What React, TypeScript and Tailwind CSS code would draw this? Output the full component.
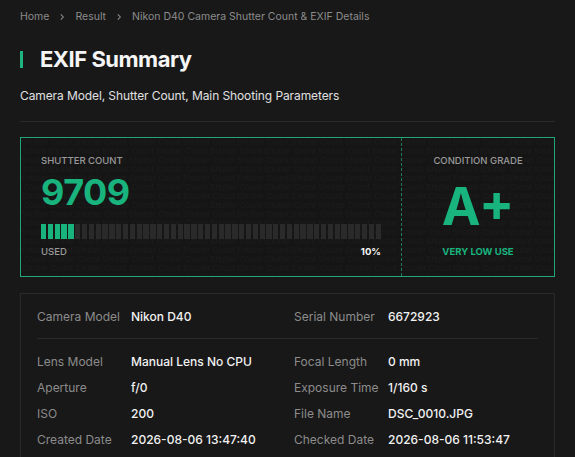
const rows = [
  [
    { label: "Lens Model", value: "Manual Lens No CPU" },
    { label: "Focal Length", value: "0 mm" },
  ],
  [
    { label: "Aperture", value: "f/0" },
    { label: "Exposure Time", value: "1/160 s" },
  ],
  [
    { label: "ISO", value: "200" },
    { label: "File Name", value: "DSC_0010.JPG" },
  ],
  [
    { label: "Created Date", value: "2026-08-06 13:47:40" },
    { label: "Checked Date", value: "2026-08-06 11:53:47" },
  ],
];

const SEGMENTS = 50;
const USED = 5;

function Chevron() {
  return (
    <svg width="8" height="8" viewBox="0 0 8 8" className="mx-[9px]" fill="none">
      <path d="M2.8 1.3 5.3 4 2.8 6.7" stroke="#8a8a8a" strokeWidth="1.1" />
    </svg>
  );
}

// faint repeated "Shutter Count" texture behind the shutter card
function Watermark() {
  return (
    <svg className="pointer-events-none absolute inset-0 h-full w-full" aria-hidden>
      <defs>
        <pattern id="wm" width="54" height="18" patternUnits="userSpaceOnUse">
          <text x="0" y="7" fontSize="8" fill="#1b1b1b" fontFamily="Inter, sans-serif">
            Shutter Count
          </text>
          <text x="-27" y="16" fontSize="8" fill="#1b1b1b" fontFamily="Inter, sans-serif">
            Shutter Count
          </text>
          <text x="27" y="16" fontSize="8" fill="#1b1b1b" fontFamily="Inter, sans-serif">
            Shutter Count
          </text>
        </pattern>
      </defs>
      <rect width="100%" height="100%" fill="url(#wm)" />
    </svg>
  );
}

function Field({ label, value }: { label: string; value: string }) {
  return (
    <div className="flex items-center">
      <span className="w-[94px] shrink-0 text-[#8c8c8c]">{label}</span>
      <span className="font-medium text-[#f2f2f2]">{value}</span>
    </div>
  );
}

export default function App() {
  return (
    <div
      className="min-h-[457px] bg-[#181818] px-5 text-[#e6e6e6]"
      style={{ fontFamily: "Inter, 'Noto Sans', sans-serif" }}
    >
      <nav className="flex items-center pt-[9px] text-[10.5px] leading-4 text-[#8c8c8c]">
        <span>Home</span>
        <Chevron />
        <span>Result</span>
        <Chevron />
        <span>Nikon D40 Camera Shutter Count &amp; EXIF Details</span>
      </nav>

      <div className="mt-[20px] flex items-center">
        <span className="h-[17px] w-[3px] bg-[#1fb380]" />
        <h1 className="ml-[17px] text-[22px] leading-7 font-bold tracking-[-0.5px] text-[#f5f5f5]">
          EXIF Summary
        </h1>
      </div>

      <p className="mt-[15px] text-[12px] leading-4 tracking-[-0.1px] text-[#e0e0e0]">
        Camera Model, Shutter Count, Main Shooting Parameters
      </p>

      <div className="mt-[17px] h-px bg-[#2a2a2a]" />

      <section className="relative mt-[15px] flex h-[140px] border border-[#22a675] bg-[#151515]">
        <Watermark />
        <div className="relative flex w-[381px] flex-col border-r border-dashed border-[#1f7a58] px-5 pt-[17px]">
          <span className="text-[9.5px] leading-3 font-medium text-[#9a9a9a]">SHUTTER COUNT</span>
          <span className="mt-[5px] text-[36px] leading-10 font-bold tracking-[-0.5px] text-[#19b37e]">
            9709
          </span>
          <div className="mt-[12px] flex h-[15px] gap-[1.5px]">
            {Array.from({ length: SEGMENTS }).map((_, i) => (
              <div
                key={i}
                className={i < USED ? "flex-1 bg-[#19b37e]" : "flex-1 bg-[#2a2a2a]"}
              />
            ))}
          </div>
          <div className="mt-[7px] flex items-center justify-between text-[9.5px] leading-3">
            <span className="font-medium text-[#9a9a9a]">USED</span>
            <span className="font-bold text-[#f5f5f5]">10%</span>
          </div>
        </div>
        <div className="relative flex flex-1 flex-col items-center pt-[17px]">
          <span className="text-[9.5px] leading-3 font-medium text-[#9a9a9a]">CONDITION GRADE</span>
          <span className="mt-[14px] text-[52px] leading-[52px] font-bold text-[#19b37e]">A+</span>
          <span className="mt-[13px] text-[9.5px] leading-3 font-bold text-[#19b37e]">VERY LOW USE</span>
        </div>
      </section>

      <section className="mt-[16px] border border-[#2a2a2a] px-4 pt-[15px] pb-4 text-[12px] leading-4">
        <div className="grid grid-cols-2 gap-x-[13px]">
          <Field label="Camera Model" value="Nikon D40" />
          <Field label="Serial Number" value="6672923" />
        </div>
        <div className="mt-[13px] mb-[15px] h-px bg-[#2a2a2a]" />
        <div className="grid grid-cols-2 gap-x-[13px] gap-y-[10px]">
          {rows.flatMap((r, i) =>
            r.map((f) => <Field key={i + f.label} label={f.label} value={f.value} />)
          )}
        </div>
      </section>
    </div>
  );
}
